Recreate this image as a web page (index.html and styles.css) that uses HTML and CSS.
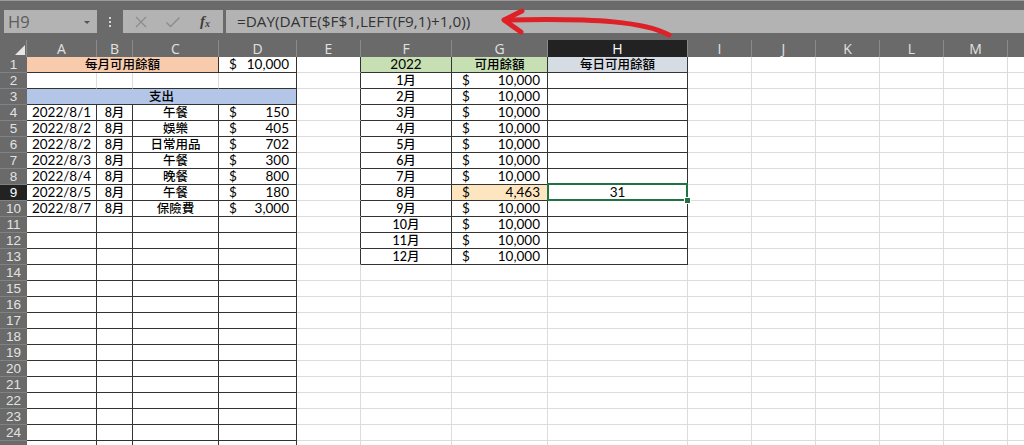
FILE: index.html
```
<!DOCTYPE html>
<html lang="zh-Hant">
<head>
<meta charset="utf-8">
<title>Excel</title>
<link rel="stylesheet" href="styles.css">
</head>
<body>
<div class="toolbar">
  <div class="namebox"><span class="nb-text">H9</span><span class="nb-caret"></span></div>
  <div class="dots"><span></span><span></span><span></span></div>
  <div class="fxbox">
    <svg class="ico" width="14" height="14" viewBox="0 0 14 14"><path d="M2 2 L12 12 M12 2 L2 12" stroke="#8c8c8c" stroke-width="1.3" fill="none"/></svg>
    <svg class="ico" width="16" height="14" viewBox="0 0 16 14"><path d="M1.5 7.5 L5.5 11.5 L14.5 2.5" stroke="#8c8c8c" stroke-width="1.4" fill="none"/></svg>
    <span class="fx">f<sub>x</sub></span>
  </div>
  <div class="formula">=DAY(DATE($F$1,LEFT(F9,1)+1,0))</div>
</div>
<svg class="arrow" width="1024" height="40" viewBox="0 0 1024 40">
  <path d="M669,35 C645,22 600,18 505,20" stroke="#de2027" stroke-width="5" fill="none" stroke-linecap="round"/>
  <path d="M522,11 L504,20 L521,32" stroke="#de2027" stroke-width="5" fill="none" stroke-linecap="round" stroke-linejoin="round"/>
</svg>

<div class="sheet">
  <div class="corner"><svg width="27" height="17" viewBox="0 0 27 17"><path d="M25 5 L25 15 L15 15 Z" fill="#e6e6e6"/></svg></div>
  <div class="ch">A</div><div class="ch">B</div><div class="ch">C</div><div class="ch">D</div><div class="ch">E</div><div class="ch">F</div><div class="ch">G</div><div class="ch act">H</div><div class="ch">I</div><div class="ch">J</div><div class="ch">K</div><div class="ch">L</div><div class="ch">M</div><div class="ch"></div>

  <!-- row 1 -->
  <div class="rh">1</div>
  <div class="c b span3 peach zh">每月可用餘額</div>
  <div class="c b acc"><span>$</span><span>10,000</span></div>
  <div class="c br"></div>
  <div class="c b green">2022</div>
  <div class="c b green zh">可用餘額</div>
  <div class="c b grayblue zh">每日可用餘額</div>
  <div class="c"></div><div class="c"></div><div class="c"></div><div class="c"></div><div class="c"></div><div class="c"></div>

  <!-- row 2 -->
  <div class="rh">2</div>
  <div class="c bb"></div><div class="c bb"></div><div class="c bb"></div><div class="c b"></div>
  <div class="c br"></div>
  <div class="c b zh">1月</div>
  <div class="c b acc"><span>$</span><span>10,000</span></div>
  <div class="c b"></div>
  <div class="c"></div><div class="c"></div><div class="c"></div><div class="c"></div><div class="c"></div><div class="c"></div>

  <!-- row 3 -->
  <div class="rh">3</div>
  <div class="c b span4 blue zh">支出</div>
  <div class="c br"></div>
  <div class="c b zh">2月</div>
  <div class="c b acc"><span>$</span><span>10,000</span></div>
  <div class="c b"></div>
  <div class="c"></div><div class="c"></div><div class="c"></div><div class="c"></div><div class="c"></div><div class="c"></div>

  <!-- row 4 -->
  <div class="rh">4</div>
  <div class="c b">2022/8/1</div><div class="c b zh">8月</div><div class="c b zh">午餐</div>
  <div class="c b acc"><span>$</span><span>150</span></div>
  <div class="c br"></div>
  <div class="c b zh">3月</div>
  <div class="c b acc"><span>$</span><span>10,000</span></div>
  <div class="c b"></div>
  <div class="c"></div><div class="c"></div><div class="c"></div><div class="c"></div><div class="c"></div><div class="c"></div>

  <!-- row 5 -->
  <div class="rh">5</div>
  <div class="c b">2022/8/2</div><div class="c b zh">8月</div><div class="c b zh">娛樂</div>
  <div class="c b acc"><span>$</span><span>405</span></div>
  <div class="c br"></div>
  <div class="c b zh">4月</div>
  <div class="c b acc"><span>$</span><span>10,000</span></div>
  <div class="c b"></div>
  <div class="c"></div><div class="c"></div><div class="c"></div><div class="c"></div><div class="c"></div><div class="c"></div>

  <!-- row 6 -->
  <div class="rh">6</div>
  <div class="c b">2022/8/2</div><div class="c b zh">8月</div><div class="c b zh">日常用品</div>
  <div class="c b acc"><span>$</span><span>702</span></div>
  <div class="c br"></div>
  <div class="c b zh">5月</div>
  <div class="c b acc"><span>$</span><span>10,000</span></div>
  <div class="c b"></div>
  <div class="c"></div><div class="c"></div><div class="c"></div><div class="c"></div><div class="c"></div><div class="c"></div>

  <!-- row 7 -->
  <div class="rh">7</div>
  <div class="c b">2022/8/3</div><div class="c b zh">8月</div><div class="c b zh">午餐</div>
  <div class="c b acc"><span>$</span><span>300</span></div>
  <div class="c br"></div>
  <div class="c b zh">6月</div>
  <div class="c b acc"><span>$</span><span>10,000</span></div>
  <div class="c b"></div>
  <div class="c"></div><div class="c"></div><div class="c"></div><div class="c"></div><div class="c"></div><div class="c"></div>

  <!-- row 8 -->
  <div class="rh">8</div>
  <div class="c b">2022/8/4</div><div class="c b zh">8月</div><div class="c b zh">晚餐</div>
  <div class="c b acc"><span>$</span><span>800</span></div>
  <div class="c br"></div>
  <div class="c b zh">7月</div>
  <div class="c b acc"><span>$</span><span>10,000</span></div>
  <div class="c b"></div>
  <div class="c"></div><div class="c"></div><div class="c"></div><div class="c"></div><div class="c"></div><div class="c"></div>

  <!-- row 9 -->
  <div class="rh act">9</div>
  <div class="c b">2022/8/5</div><div class="c b zh">8月</div><div class="c b zh">午餐</div>
  <div class="c b acc"><span>$</span><span>180</span></div>
  <div class="c br"></div>
  <div class="c b zh">8月</div>
  <div class="c b acc yellow"><span>$</span><span>4,463</span></div>
  <div class="c b sel">31</div>
  <div class="c"></div><div class="c"></div><div class="c"></div><div class="c"></div><div class="c"></div><div class="c"></div>

  <!-- row 10 -->
  <div class="rh">10</div>
  <div class="c b">2022/8/7</div><div class="c b zh">8月</div><div class="c b zh">保險費</div>
  <div class="c b acc"><span>$</span><span>3,000</span></div>
  <div class="c br"></div>
  <div class="c b zh">9月</div>
  <div class="c b acc"><span>$</span><span>10,000</span></div>
  <div class="c b"></div>
  <div class="c"></div><div class="c"></div><div class="c"></div><div class="c"></div><div class="c"></div><div class="c"></div>

  <!-- row 11 -->
  <div class="rh">11</div>
  <div class="c b"></div><div class="c b"></div><div class="c b"></div><div class="c b"></div>
  <div class="c br"></div>
  <div class="c b zh">10月</div>
  <div class="c b acc"><span>$</span><span>10,000</span></div>
  <div class="c b"></div>
  <div class="c"></div><div class="c"></div><div class="c"></div><div class="c"></div><div class="c"></div><div class="c"></div>

  <!-- row 12 -->
  <div class="rh">12</div>
  <div class="c b"></div><div class="c b"></div><div class="c b"></div><div class="c b"></div>
  <div class="c br"></div>
  <div class="c b zh">11月</div>
  <div class="c b acc"><span>$</span><span>10,000</span></div>
  <div class="c b"></div>
  <div class="c"></div><div class="c"></div><div class="c"></div><div class="c"></div><div class="c"></div><div class="c"></div>

  <!-- row 13 -->
  <div class="rh">13</div>
  <div class="c b"></div><div class="c b"></div><div class="c b"></div><div class="c b"></div>
  <div class="c br"></div>
  <div class="c b zh">12月</div>
  <div class="c b acc"><span>$</span><span>10,000</span></div>
  <div class="c b"></div>
  <div class="c"></div><div class="c"></div><div class="c"></div><div class="c"></div><div class="c"></div><div class="c"></div>

  <!-- rows 14-25 -->
  <div class="rh">14</div><div class="c b"></div><div class="c b"></div><div class="c b"></div><div class="c b"></div><div class="c"></div><div class="c"></div><div class="c"></div><div class="c"></div><div class="c"></div><div class="c"></div><div class="c"></div><div class="c"></div><div class="c"></div><div class="c"></div>
  <div class="rh">15</div><div class="c b"></div><div class="c b"></div><div class="c b"></div><div class="c b"></div><div class="c"></div><div class="c"></div><div class="c"></div><div class="c"></div><div class="c"></div><div class="c"></div><div class="c"></div><div class="c"></div><div class="c"></div><div class="c"></div>
  <div class="rh">16</div><div class="c b"></div><div class="c b"></div><div class="c b"></div><div class="c b"></div><div class="c"></div><div class="c"></div><div class="c"></div><div class="c"></div><div class="c"></div><div class="c"></div><div class="c"></div><div class="c"></div><div class="c"></div><div class="c"></div>
  <div class="rh">17</div><div class="c b"></div><div class="c b"></div><div class="c b"></div><div class="c b"></div><div class="c"></div><div class="c"></div><div class="c"></div><div class="c"></div><div class="c"></div><div class="c"></div><div class="c"></div><div class="c"></div><div class="c"></div><div class="c"></div>
  <div class="rh">18</div><div class="c b"></div><div class="c b"></div><div class="c b"></div><div class="c b"></div><div class="c"></div><div class="c"></div><div class="c"></div><div class="c"></div><div class="c"></div><div class="c"></div><div class="c"></div><div class="c"></div><div class="c"></div><div class="c"></div>
  <div class="rh">19</div><div class="c b"></div><div class="c b"></div><div class="c b"></div><div class="c b"></div><div class="c"></div><div class="c"></div><div class="c"></div><div class="c"></div><div class="c"></div><div class="c"></div><div class="c"></div><div class="c"></div><div class="c"></div><div class="c"></div>
  <div class="rh">20</div><div class="c b"></div><div class="c b"></div><div class="c b"></div><div class="c b"></div><div class="c"></div><div class="c"></div><div class="c"></div><div class="c"></div><div class="c"></div><div class="c"></div><div class="c"></div><div class="c"></div><div class="c"></div><div class="c"></div>
  <div class="rh">21</div><div class="c b"></div><div class="c b"></div><div class="c b"></div><div class="c b"></div><div class="c"></div><div class="c"></div><div class="c"></div><div class="c"></div><div class="c"></div><div class="c"></div><div class="c"></div><div class="c"></div><div class="c"></div><div class="c"></div>
  <div class="rh">22</div><div class="c b"></div><div class="c b"></div><div class="c b"></div><div class="c b"></div><div class="c"></div><div class="c"></div><div class="c"></div><div class="c"></div><div class="c"></div><div class="c"></div><div class="c"></div><div class="c"></div><div class="c"></div><div class="c"></div>
  <div class="rh">23</div><div class="c b"></div><div class="c b"></div><div class="c b"></div><div class="c b"></div><div class="c"></div><div class="c"></div><div class="c"></div><div class="c"></div><div class="c"></div><div class="c"></div><div class="c"></div><div class="c"></div><div class="c"></div><div class="c"></div>
  <div class="rh">24</div><div class="c b"></div><div class="c b"></div><div class="c b"></div><div class="c b"></div><div class="c"></div><div class="c"></div><div class="c"></div><div class="c"></div><div class="c"></div><div class="c"></div><div class="c"></div><div class="c"></div><div class="c"></div><div class="c"></div>
  <div class="rh"></div><div class="c b"></div><div class="c b"></div><div class="c b"></div><div class="c b"></div><div class="c"></div><div class="c"></div><div class="c"></div><div class="c"></div><div class="c"></div><div class="c"></div><div class="c"></div><div class="c"></div><div class="c"></div><div class="c"></div>
</div>
</body>
</html>
```

FILE: styles.css
```
* { box-sizing: border-box; }
html, body { margin: 0; padding: 0; }
body {
  width: 1024px;
  height: 445px;
  overflow: hidden;
  background: #ffffff;
  position: relative;
  font-family: "Lato", "Liberation Sans", "Noto Sans CJK TC", sans-serif;
}

/* ---------- formula bar ---------- */
.toolbar {
  height: 40px;
  background: #6a6a6a;
  border-top: 1px solid #9c9c9c;
  padding: 9px 0 7px 4px;
  display: flex;
  align-items: stretch;
}
.namebox {
  width: 93px;
  background: #b3b3b3;
  display: flex;
  align-items: center;
  justify-content: space-between;
  padding: 0 7px 0 4px;
}
.nb-text {
  font-family: "Open Sans", "Liberation Sans", sans-serif;
  font-size: 16.5px;
  color: #5c5c5c;
}
.nb-caret {
  width: 0;
  height: 0;
  border-left: 3px solid transparent;
  border-right: 3px solid transparent;
  border-top: 3px solid #555;
  margin-top: 2px;
}
.dots {
  width: 26px;
  display: flex;
  flex-direction: column;
  align-items: center;
  justify-content: center;
  gap: 2px;
}
.dots span {
  width: 2px;
  height: 2px;
  background: #d6d6d6;
}
.fxbox {
  width: 100px;
  background: #b3b3b3;
  display: flex;
  align-items: center;
  padding: 0 0 0 11px;
  gap: 17px;
}
.ico { display: block; }
.fx {
  font-family: "Liberation Serif", "DejaVu Serif", serif;
  font-style: italic;
  font-weight: bold;
  font-size: 15px;
  color: #3e3e3e;
  margin-left: 2px;
  line-height: 1;
}
.fx sub {
  font-size: 10px;
  vertical-align: -1px;
}
.formula {
  flex: 1;
  margin-left: 3px;
  background: #b3b3b3;
  font-family: "Open Sans", "Liberation Sans", sans-serif;
  font-size: 15.3px;
  color: #333;
  line-height: 23px;
  padding-left: 11px;
  white-space: nowrap;
}
.arrow {
  position: absolute;
  left: 0;
  top: 0;
  pointer-events: none;
}

/* ---------- sheet grid ---------- */
.sheet {
  display: grid;
  grid-template-columns: 27px 70px 36px 86px 78px 64px 91px 96px 140px repeat(6, 64px);
  grid-template-rows: 17px;
  grid-auto-rows: 16px;
  width: 1072px;
}
.corner { background: #6a6a6a; border-right: 1px solid #8a8a8a; }
.corner svg { display: block; }
.ch {
  background: #6a6a6a;
  color: #e2e2e2;
  font-family: "Open Sans", "Liberation Sans", sans-serif;
  font-size: 14px;
  line-height: 17px;
  text-align: center;
  border-right: 1px solid #8a8a8a;
}
.ch.act { background: #222222; color: #ffffff; }
.rh {
  background: #6a6a6a;
  color: #e2e2e2;
  font-family: "Liberation Sans", "Open Sans", sans-serif;
  font-size: 13.5px;
  line-height: 15px;
  text-align: center;
  border-bottom: 1px solid #828282;
  overflow: hidden;
}
.rh.act { background: #222222; color: #ffffff; }

.c {
  border-right: 1px solid #dcdcdc;
  border-bottom: 1px solid #dcdcdc;
  font-size: 13.5px;
  line-height: 15px;
  color: #000000;
  text-align: center;
  white-space: nowrap;
  overflow: hidden;
}
.zh { font-size: 12.5px; font-weight: 500; }
.b { border-right-color: #333; border-bottom-color: #333; }
.bb { border-bottom-color: #333; }
.br { border-right-color: #333; }
.span3 { grid-column: span 3; }
.span4 { grid-column: span 4; }

.peach { background: #f8cbad; }
.blue { background: #b4c6e7; }
.green { background: #c6e0b4; }
.grayblue { background: #d6dce4; }
.yellow { background: #fde6bf; }

.acc {
  display: flex;
  justify-content: space-between;
  padding: 0 7px 0 10px;
}

.sel { position: relative; overflow: visible; }
.sel::after {
  content: "";
  position: absolute;
  left: -1px;
  top: -2px;
  right: -1px;
  bottom: -1px;
  border: 2px solid #217346;
}
.sel::before {
  content: "";
  position: absolute;
  right: -4px;
  bottom: -4px;
  width: 5px;
  height: 5px;
  background: #217346;
  border: 1px solid #ffffff;
  z-index: 1;
}
```
